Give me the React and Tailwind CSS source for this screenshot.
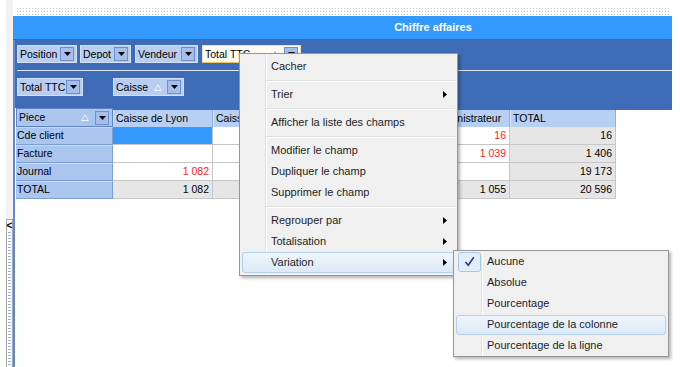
import React from 'react';

const Caret = () => (
  <svg width="7" height="4" viewBox="0 0 7 4">
    <path d="M0 0H7L3.5 4Z" fill="#000" />
  </svg>
);

const SortUp = ({ color = '#eef3fc' }) => (
  <svg width="8" height="7" viewBox="0 0 8 7">
    <path d="M4 0.7L7.4 6.5H0.6Z" fill="none" stroke={color} strokeWidth="1" />
  </svg>
);

const RightArrow = () => (
  <svg width="4" height="7" viewBox="0 0 4 7">
    <path d="M0 0L4 3.5L0 7Z" fill="#000" />
  </svg>
);

function Drop() {
  return (
    <span className="flex h-[14px] w-[14px] shrink-0 items-center justify-center border border-[#6e8fca] bg-[#a5bfe9]">
      <Caret />
    </span>
  );
}

function Field({ label, w, sort, active }) {
  return (
    <div
      className={`flex h-[18px] items-center border pl-[2px] pr-[2px] ${w} ${
        active ? 'border-[#ede2bd] border-b-[#efc35e] bg-[#fffdf3]' : 'border-[#d2dff5] bg-[#b8cdef]'
      }`}
    >
      <span className="flex-1 truncate leading-none">{label}</span>
      {sort && (
        <span className="mr-[5px] flex">
          <SortUp color={active ? '#9fb3d8' : '#eef3fc'} />
        </span>
      )}
      <Drop />
    </div>
  );
}

const cols = [
  { name: 'Caisse de Lyon', w: 'w-[100px]' },
  { name: 'Caisse de Paris', w: 'w-[92px]' },
  { name: 'Caisse Web', w: 'w-[91px]' },
  { name: 'Caisse Administrateur', w: 'w-[114px]' },
  { name: 'TOTAL', w: 'w-[106px]' },
];

const rows = [
  { label: 'Cde client', cells: ['sel', '', '', '16', '16'], red: [3] },
  { label: 'Facture', cells: ['', '', '', '1 039', '1 406'], red: [3] },
  { label: 'Journal', cells: ['1 082', '', '', '', '19 173'], red: [0] },
  { label: 'TOTAL', cells: ['1 082', '', '', '1 055', '20 596'], red: [], total: true },
];

function MenuItem({ label, arrow, hot }) {
  return (
    <div className="h-[21px] px-[2px]">
      <div
        className={`flex h-full items-center rounded-[3px] border pl-[28px] pr-[7px] ${
          hot
            ? 'border-[#b3cfe9] bg-[linear-gradient(#eef5fc,#dce9f6)]'
            : 'border-transparent'
        }`}
      >
        <span className="flex-1">{label}</span>
        {arrow && <RightArrow />}
      </div>
    </div>
  );
}

function Sep() {
  return (
    <div className="flex h-[7px] items-center pl-[26px] pr-[2px]">
      <div className="h-[2px] w-full border-b border-white bg-[#e0e0e0]" />
    </div>
  );
}

function SubItem({ label, checked, hot }) {
  return (
    <div className="flex h-[21px] items-center px-[2px]">
      <div
        className={`flex h-[20px] w-full items-center rounded-[3px] border ${
          hot ? 'border-[#b3cfe9] bg-[linear-gradient(#eef5fc,#dce9f6)]' : 'border-transparent'
        }`}
      >
        <div className="flex w-[30px] justify-start pl-[1px]">
          {checked && (
            <span className="flex h-[20px] w-[23px] items-center justify-center rounded-[3px] border border-[#a8c8ea] bg-[#e3eefb]">
              <svg width="11" height="11" viewBox="0 0 11 11">
                <path d="M1.5 6L4.2 9.2L9.8 1.2" fill="none" stroke="#1d3a8f" strokeWidth="1.6" />
              </svg>
            </span>
          )}
        </div>
        <span>{label}</span>
      </div>
    </div>
  );
}

export default function App() {
  return (
    <div className="relative flex h-[367px] w-[680px] overflow-hidden bg-white font-['Liberation_Sans',Arial,sans-serif] text-black">
      {/* left collapse strip */}
      <div className="flex w-[13px] flex-col pl-[6px]">
        <div className="h-[219px] bg-[#f2f2f2]" />
        <div className="flex flex-1 flex-col items-center border border-b-0 border-[#a5a5a5] bg-white">
          <span className="h-[12px] text-[10px] font-bold leading-[12px]">&lt;</span>
          <div className="w-[3px] flex-1 bg-[repeating-linear-gradient(#8db6ec_0px,#8db6ec_1px,transparent_1px,transparent_3px)]" />
        </div>
      </div>

      {/* main */}
      <div className="flex w-[659px] flex-col">
        <div className="ml-[3px] mr-[2px] mt-[7px] h-[8px] bg-[radial-gradient(circle,#bdbdbd_0.7px,transparent_0.9px)] bg-[length:3px_3px]" />
        <div className="mt-px flex h-[24px] items-center justify-center border-b border-[#1c6fd2] bg-[#3399ff] pl-[181px] text-[11px] font-bold text-white">
          Chiffre affaires
        </div>

        <div className="flex flex-1 flex-col border-l-2 border-[#6289cc] text-[10.5px]">
          {/* filter / field area */}
          <div className="h-[68px] bg-[#3e6cb6] pl-[2px] pt-[5px]">
            <div className="flex">
              <Field label="Position" w="w-[60px]" />
              <div className="ml-[3px]"><Field label="Depot" w="w-[51px]" /></div>
              <div className="ml-[4px]"><Field label="Vendeur" w="w-[63px]" /></div>
              <div className="ml-[4px]"><Field label="Total TTC" w="w-[99px]" sort active /></div>
            </div>
            <div className="mt-[7px] h-px bg-[#dbe4f3]" />
            <div className="mt-[7px] flex">
              <Field label="Total TTC" w="w-[66px]" />
              <div className="ml-[30px]"><Field label="Caisse" w="w-[71px]" sort /></div>
            </div>
          </div>

          {/* pivot grid */}
          <div className="flex h-[19px]">
            <div className="ml-px flex h-[19px] w-[97px] items-center border border-[#5f83c4] bg-[#aac6ef] pl-[2px] pr-[3px]">
              <span className="flex-1">Piece</span>
              <span className="mr-[6px] flex"><SortUp /></span>
              <Drop />
            </div>
            {cols.map((c) => (
              <div key={c.name} className={`${c.w} h-[19px] shrink-0 border-t-2 border-[#3e6cb6]`}>
                <div className="flex h-[17px] items-center overflow-hidden whitespace-nowrap border-l border-r border-l-[#d6e4f8] border-r-[#8fafe0] bg-[#b6cff2] pl-[2px]">
                  {c.name}
                </div>
              </div>
            ))}
            <div className="h-[19px] flex-1 border-t-2 border-[#3e6cb6]" />
          </div>

          {rows.map((r) => (
            <div key={r.label} className="flex h-[18px]">
              <div className="ml-px flex h-[18px] w-[97px] items-center border-b border-r border-t border-b-[#7d9dd5] border-r-[#7d9dd5] border-t-[#c8d9f5] bg-[#aac6ef] pl-px">
                {r.label}
              </div>
              {r.cells.map((v, i) => {
                const gray = r.total || i === 4;
                if (v === 'sel') {
                  return (
                    <div key={i} className={`${cols[i].w} h-[18px] shrink-0 border-b border-r border-[#c6c6c6]`}>
                      <div className="h-full border border-dotted border-[#c77a3a] bg-[#3399ff]" />
                    </div>
                  );
                }
                return (
                  <div
                    key={i}
                    className={`${cols[i].w} flex h-[18px] shrink-0 items-center justify-end border-b border-r border-[#c6c6c6] pr-[3px] ${
                      gray ? 'bg-[#e6e6e6]' : 'bg-white'
                    } ${r.red.includes(i) ? 'text-[#ff2222]' : 'text-black'}`}
                  >
                    {v}
                  </div>
                );
              })}
            </div>
          ))}
        </div>
      </div>

      {/* context menu */}
      <div className="absolute left-[239px] top-[53px] w-[219px] border border-[#979797] bg-[linear-gradient(to_right,#f0f0f0_25px,#e2e3e3_25px,#e2e3e3_26px,#ffffff_26px,#ffffff_27px,#f0f0f0_27px)] py-[2px] text-[11px] text-[#1e1e1e] shadow-[2px_2px_3px_rgba(0,0,0,0.3)]">
        <MenuItem label="Cacher" />
        <Sep />
        <MenuItem label="Trier" arrow />
        <Sep />
        <MenuItem label="Afficher la liste des champs" />
        <Sep />
        <MenuItem label="Modifier le champ" />
        <MenuItem label="Dupliquer le champ" />
        <MenuItem label="Supprimer le champ" />
        <Sep />
        <MenuItem label="Regrouper par" arrow />
        <MenuItem label="Totalisation" arrow />
        <MenuItem label="Variation" arrow hot />
      </div>

      {/* sub menu */}
      <div className="absolute left-[453px] top-[250px] w-[216px] border border-[#979797] bg-[linear-gradient(to_right,#f0f0f0_27px,#e2e3e3_27px,#e2e3e3_28px,#ffffff_28px,#ffffff_29px,#f0f0f0_29px)] text-[11px] text-[#1e1e1e] shadow-[2px_2px_3px_rgba(0,0,0,0.3)]">
        <SubItem label="Aucune" checked />
        <SubItem label="Absolue" />
        <SubItem label="Pourcentage" />
        <SubItem label="Pourcentage de la colonne" hot />
        <SubItem label="Pourcentage de la ligne" />
      </div>
    </div>
  );
}
